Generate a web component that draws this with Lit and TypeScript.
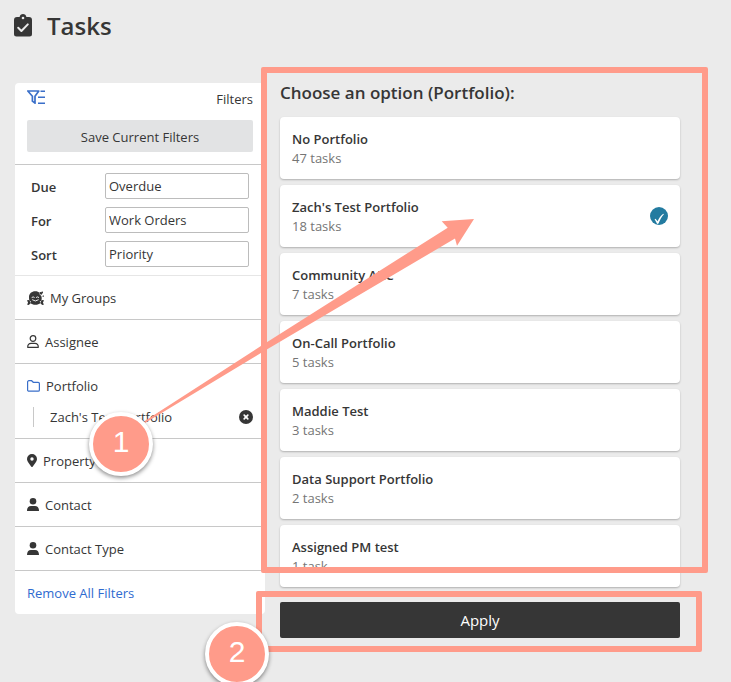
import { LitElement, html, svg, css } from "lit";
import { customElement, state } from "lit/decorators.js";

const icons = {
  tasks: html`<svg class="icon" width="18" height="24" viewBox="0 0 18 24" aria-hidden="true">
    <path fill="currentColor" fill-rule="evenodd" d="M3 3h2.600c.3-1.800 1.700-3 3.400-3s3.100 1.200 3.400 3H15a3 3 0 0 1 3 3v14a2.500 2.500 0 0 1-2.500 2.500h-13A2.500 2.500 0 0 1 0 20V6a3 3 0 0 1 3-3z"/>
    <circle cx="9" cy="4" r="1.300" fill="#ebebeb"/>
    <path d="M4.200 13.800l3.200 3.200 6.400-6.600" fill="none" stroke="#ebebeb" stroke-width="2" stroke-linecap="round" stroke-linejoin="round"/>
  </svg>`,
  filter: html`<svg class="icon" width="18" height="15" viewBox="0 0 18 15" aria-hidden="true">
    <path d="M.8 1h11L8 6.200V13.200L5.400 11.200V6.200z" fill="none" stroke="#3a6fc9" stroke-width="1.700" stroke-linejoin="round"/>
    <path d="M13.500 1.200H18M11 7.200h7M11 13.200h7" stroke="#3a6fc9" stroke-width="1.600"/>
  </svg>`,
  groups: html`<svg class="icon" width="17" height="14" viewBox="0 0 17 14" aria-hidden="true">
    <path fill="currentColor" d="M2 6C2 2.600 4.700.3 8.300.3c2 0 3.300.6 4.300 1.700l-.3 1.100 2 1.900c.6 1.600.5 3.200 0 4.700l-1.600.8.7 1.700c-1.200.9-2.900 1.500-5 1.500s-3.800-.6-5-1.500l.6-1.700-1.700-.9C2.100 8.200 2 7 2 6z"/>
    <path fill="currentColor" d="M14.200 4l-1.600-1.600c-.6-.8.500-1.900 1.500-1 .5-1.400 2.200-.9 1.900.3zM16.400 6l-1.200-.7 1-1 .8.700zM0 9.200l2.300-.3 1.500 3-2 2L0 13.500l1.100-1.700zM17 9.200l-2.300-.3-1.500 3 2 2 1.800-.4-1.100-1.700z"/>
    <path d="M5 6.300q1.200-1 2.300 0M9.400 6.300q1.200-1 2.300 0M5.500 8.900q2.900 2.400 5.800 0" fill="none" stroke="#fff" stroke-width=".9" stroke-linecap="round"/>
  </svg>`,
  user: html`<svg class="icon" width="12" height="13" viewBox="0 0 12 13" aria-hidden="true">
    <g fill="none" stroke="currentColor" stroke-width="1.200" stroke-linejoin="round"><circle cx="6" cy="3.500" r="2.800"/>
    <path d="M.7 12.300c0-2.300 1.300-3.900 3.400-3.900h3.800c2.100 0 3.400 1.600 3.400 3.900z"/></g>
  </svg>`,
  folder: html`<svg class="icon" width="13" height="12" viewBox="0 0 13 12" aria-hidden="true">
    <path d="M.6 2A1.300 1.300 0 0 1 1.900.7h2.700l1.700 1.600h4.800a1.300 1.300 0 0 1 1.300 1.300v6.300a1.300 1.300 0 0 1-1.300 1.300H1.900A1.300 1.300 0 0 1 .6 9.900z" fill="none" stroke="#3a6fc9" stroke-width="1.200"/>
  </svg>`,
  pin: html`<svg class="icon" width="10" height="13" viewBox="0 0 10 13" aria-hidden="true">
    <path fill="currentColor" fill-rule="evenodd" d="M5 0a5 5 0 0 1 5 5c0 2.200-3 6-4.400 7.700a.8.800 0 0 1-1.200 0C3 11 0 7.200 0 5a5 5 0 0 1 5-5zm0 3.300a1.700 1.700 0 1 0 0 3.400 1.700 1.700 0 0 0 0-3.400z"/>
  </svg>`,
  person: html`<svg class="icon" width="12" height="13" viewBox="0 0 12 13" aria-hidden="true">
    <circle cx="6" cy="3.300" r="3.300" fill="currentColor"/>
    <path fill="currentColor" d="M0 12.900C0 10 1.400 8 4 8h4c2.600 0 4 2 4 4.900z"/>
  </svg>`,
  clear: html`<svg class="icon" width="14" height="14" viewBox="0 0 14 14" aria-hidden="true">
    <circle cx="7" cy="7" r="7" fill="currentColor"/>
    <path d="M5.200 5.200l3.600 3.600M8.800 5.200l-3.600 3.600" stroke="#fff" stroke-width="1.700" stroke-linecap="round"/>
  </svg>`,
  check: html`<svg class="icon" width="18" height="18" viewBox="0 0 18 18" aria-hidden="true">
    <circle cx="9" cy="9" r="9" fill="#237ba0"/>
    <path d="M4.600 12.300l.9-.6 2.100 2.600C9 11 10.700 8.800 13.300 6.700l.6.500C11.500 10 10 12.800 8.500 16.500l-1.300.5z" fill="#fff"/>
  </svg>`,
};

interface Option { name: string; count: string }

const options: Option[] = [
  { name: "No Portfolio", count: "47 tasks" },
  { name: "Zach's Test Portfolio", count: "18 tasks" },
  { name: "Community ARC", count: "7 tasks" },
  { name: "On-Call Portfolio", count: "5 tasks" },
  { name: "Maddie Test", count: "3 tasks" },
  { name: "Data Support Portfolio", count: "2 tasks" },
  { name: "Assigned PM test", count: "1 task" },
];

const fields = [
  { id: "due", label: "Due", value: "Overdue" },
  { id: "for", label: "For", value: "Work Orders" },
  { id: "sort", label: "Sort", value: "Priority" },
];

@customElement("app-root")
export class AppRoot extends LitElement {
  @state() private selected = 1;

  static styles = css`
    :host {
      display: block;
      position: relative;
      min-height: 100vh;
      overflow: hidden;
      background: #ebebeb;
      color: #363636;
      font: 13px/20px "Open Sans", "Noto Sans", sans-serif;
    }
    * { box-sizing: border-box; }
    button, input { font: inherit; color: inherit; }
    button { border: 0; padding: 0; background: none; text-align: left; cursor: pointer; }
    .icon { display: block; flex: none; }
    .title {
      display: flex;
      align-items: center;
      gap: 15px;
      height: 52px;
      padding: 0 14px;
    }
    h1 { margin: 0; font-size: 24px; line-height: 32px; font-weight: 600; }
    .layout {
      display: flex;
      align-items: flex-start;
      gap: 15px;
      padding: 31px 51px 44px 15px;
    }
    .filters { flex: none; width: 250px; background: #fff; border-radius: 4px; }
    .top { padding: 6px 12px 12px; border-bottom: 1px solid #c8c8c8; }
    .bar { display: flex; justify-content: space-between; height: 31px; }
    .bar .icon { margin-top: 1px; }
    .save {
      display: block;
      width: 100%;
      height: 32px;
      padding-top: 2px;
      border-radius: 2px;
      background: #e2e3e4;
      text-align: center;
    }
    .fields {
      display: grid;
      gap: 8px;
      padding: 8px 16px;
      border-bottom: 1px solid #e6e6e6;
    }
    .field { display: flex; align-items: center; justify-content: space-between; height: 26px; }
    .field label { padding-top: 2px; font-weight: 600; }
    .field input {
      width: 144px;
      height: 26px;
      padding: 0 3px;
      border: 1px solid #bcbcbc;
      border-radius: 2px;
      background: #fff;
    }
    .group { border-bottom: 1px solid #c8c8c8; }
    .item {
      display: flex;
      align-items: center;
      gap: 6px;
      width: 100%;
      height: 43px;
      padding: 0 12px;
    }
    .chosen {
      display: flex;
      align-items: center;
      height: 20px;
      margin: 0 12px 11px 18px;
    }
    .chosen span { flex: 1; padding-left: 16px; border-left: 1px solid #c8c8c8; }
    .remove { display: flex; align-items: center; height: 43px; padding: 0 12px; color: #2f6bd0; text-decoration: none; }
    .panel { flex: 1; min-width: 0; }
    h2 { margin: 0 0 14px; font-size: 17px; line-height: 20px; font-weight: 600; }
    .list { display: grid; gap: 6px; margin: 0 0 15px; padding: 0; list-style: none; }
    .card {
      display: flex;
      align-items: center;
      justify-content: space-between;
      width: 100%;
      height: 62px;
      padding: 0 12px;
      border-radius: 4px;
      background: #fff;
      box-shadow: 0 1px 2px rgba(0, 0, 0, 0.25);
    }
    .text { padding-top: 2px; }
    .name, .count { display: block; line-height: 19px; }
    .name { font-weight: 600; }
    .count { color: #757575; }
    .apply {
      display: block;
      width: 100%;
      height: 36px;
      border-radius: 2px;
      background: #363636;
      color: #fff;
      font-size: 15px;
      text-align: center;
    }
    .notes { position: absolute; inset: 0; overflow: hidden; pointer-events: none; }
    .frame { position: absolute; border: 6px solid #ff9b8a; border-radius: 2px; }
    .frame-options { left: 261px; top: 67px; right: 23px; height: 506px; }
    .frame-apply { left: 256px; top: 591px; right: 29px; height: 61px; }
    .arrow { position: absolute; left: 140px; top: 215px; }
    .step {
      position: absolute;
      display: flex;
      align-items: center;
      justify-content: center;
      width: 64px;
      height: 64px;
      border: 4px solid #fff;
      border-radius: 50%;
      background: #ff9b8a;
      color: #fff;
      box-shadow: 0 2px 4px rgba(0, 0, 0, 0.45);
      font: 30px/56px "Liberation Sans", Arial, sans-serif;
      padding-bottom: 4px;
    }
    .step-one { left: 89px; top: 412px; }
    .step-two { left: 205px; top: 622px; }
  `;

  private item(icon: unknown, label: string, extra: unknown = "") {
    return html`<div class="group">
      <button class="item" type="button">${icon}<span>${label}</span></button>${extra}
    </div>`;
  }

  render() {
    return html`
      <header class="title">${icons.tasks}<h1>Tasks</h1></header>
      <main class="layout">
        <aside class="filters">
          <div class="top">
            <div class="bar">${icons.filter}<span>Filters</span></div>
            <button class="save" type="button">Save Current Filters</button>
          </div>
          <div class="fields">
            ${fields.map((f) => html`<div class="field">
              <label for=${f.id}>${f.label}</label>
              <input id=${f.id} type="text" .value=${f.value} />
            </div>`)}
          </div>
          ${this.item(icons.groups, "My Groups")}
          ${this.item(icons.user, "Assignee")}
          ${this.item(icons.folder, "Portfolio", html`<div class="chosen">
            <span>Zach's Test Portfolio</span>
            <button type="button" aria-label="Clear portfolio">${icons.clear}</button>
          </div>`)}
          ${this.item(icons.pin, "Property")}
          ${this.item(icons.person, "Contact")}
          ${this.item(icons.person, "Contact Type")}
          <a class="remove" href="#">Remove All Filters</a>
        </aside>
        <section class="panel">
          <h2>Choose an option (Portfolio):</h2>
          <ul class="list">
            ${options.map((o, i) => html`<li>
              <button class="card" type="button" aria-pressed=${i === this.selected} @click=${() => (this.selected = i)}>
                <span class="text"><span class="name">${o.name}</span><span class="count">${o.count}</span></span>
                ${i === this.selected ? icons.check : ""}
              </button>
            </li>`)}
          </ul>
          <button class="apply" type="button">Apply</button>
        </section>
      </main>
      <div class="notes">
        <div class="frame frame-options"></div>
        <div class="frame frame-apply"></div>
        <svg class="arrow" width="340" height="215" viewBox="140 215 340 215" aria-hidden="true">
          ${svg`<path fill="#ff9b8a" d="M474 219L441.700 221.300 447.700 227.700 261.700 345.500 144 421.500 145 423 261.700 352.500 455 238.500 457 245.700z"/>`}
        </svg>
        <div class="step step-one">1</div>
        <div class="step step-two">2</div>
      </div>
    `;
  }
}
